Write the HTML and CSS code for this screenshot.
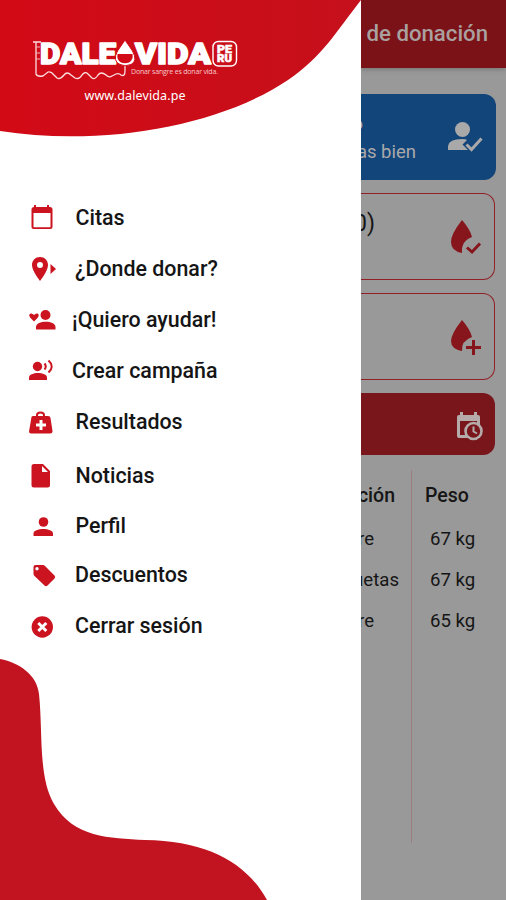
FILE: index.html
```html
<!DOCTYPE html>
<html lang="es">
<head>
<meta charset="utf-8">
<title>Dale Vida</title>
<link rel="stylesheet" href="styles.css">
</head>
<body>
<div class="app">
  <aside class="drawer">
    <header class="brand">
      <svg width="361" height="140" viewBox="0 0 361 140">
        <defs><linearGradient id="red"><stop offset="0" stop-color="#d20a16"/><stop offset="1" stop-color="#c5101b"/></linearGradient></defs>
        <path fill="url(#red)" d="M0 0H361C336 32 322 57 288 80C220 126 102 147 0 131Z"/>
        <g class="logo">
          <text x="40" y="63.500" textLength="76" lengthAdjust="spacingAndGlyphs">DALE</text>
          <text x="135" y="63.500" textLength="76" lengthAdjust="spacingAndGlyphs">VIDA</text>
        </g>
        <path d="M33 42H41M36 42V74Q37 77 43 76L48 72Q51 71 54 75L57 78Q60 80 64 75Q67 71 71 75L75 78Q79 80 82 75Q85 71 88 74L92 78Q95 80 98 75Q101 71 106 75Q109 78 112 76L116 74Q119 73 121 75Q125 77 125 71V64" fill="none" stroke="#fbdfe1" stroke-width="1.3"/>
        <path d="M36 47H40M36 53H40M36 59H40" stroke="#f4b5b9"/>
        <path d="M125 40L117.500 51Q112 61 120 64.500Q125 67 131 64.500Q138 61 132.500 51Z" fill="#fff" stroke="#d20a16"/>
        <path d="M117.500 54H132.500Q133.500 60 129 62.500Q125 64 121 62.500Q116.500 60 117.500 54Z" fill="#d20a16"/>
        <rect x="213" y="41.500" width="23.500" height="24.500" rx="5.500" fill="none" stroke="#fff" stroke-width="1.400"/>
        <g class="peru"><text x="217" y="52.500" textLength="15" lengthAdjust="spacingAndGlyphs">PE</text><text x="217" y="62" textLength="15" lengthAdjust="spacingAndGlyphs">RU</text></g>
        <text class="slogan" x="131" y="74" textLength="87">Donar sangre es donar vida.</text>
        <text class="site" x="84.500" y="100" textLength="101">www.dalevida.pe</text>
      </svg>
    </header>
    <nav class="menu">
      <a class="item"><svg class="icon" viewBox="0 0 30 30"><path fill-rule="evenodd" d="M7 2H9V4H20V2H22V4H23Q25.500 4 25.500 6.500V24Q25.500 26 23.500 26H6.500Q4.500 26 4.500 24V6.500Q4.500 4 7 4ZM6.500 10V24.200H23.500V10Z"/></svg><span>Citas</span></a>
      <a class="item near"><svg class="icon" viewBox="0 0 30 30"><path fill-rule="evenodd" d="M13 3C8.500 3 5 6.500 5 11C5 17 13 27 13 27S21 17 21 11C21 6.500 17.500 3 13 3ZM13 8A3 3 0 1 1 13 14A3 3 0 1 1 13 8ZM23.500 10L29 15L23.500 20Z"/></svg><span>¿Donde donar?</span></a>
      <a class="item close"><svg class="icon" viewBox="0 0 30 30"><circle cx="18.500" cy="10" r="5"/><path d="M9 24.500V22C9 15 28.500 15 28.500 22V24.500ZM7 16.500L3.500 13Q1 10 3.500 8.500Q5.500 8 7 10Q8.500 8 10.500 8.500Q13 10 10.500 13Z"/></svg><span>¡Quiero ayudar!</span></a>
      <a class="item close"><svg class="icon" viewBox="0 0 30 30"><circle cx="10.500" cy="10.500" r="4.700"/><path d="M2 24V21.500C2 15.500 20 15.500 20 21.500V24Z"/><path class="stroke" d="M17.500 7.500Q20 10.500 17.500 13.500M21.500 4.500Q28 10.500 21.500 16.500"/></svg><span>Crear campaña</span></a>
      <a class="item"><svg class="icon" viewBox="0 0 30 30"><path fill-rule="evenodd" d="M4.500 10Q4.500 9 6.500 9H9V8Q9 4.500 13.500 4.500Q18 4.500 18 8V9H21Q23.500 9 23.500 11L25.500 24Q25.500 26.500 23 26.500H4Q2 26.500 2 24.500ZM11 9H16V8Q16 6.500 13.500 6.500Q11 6.500 11 8ZM12.500 13V16.500H9V19.500H12.500V23H15.500V19.500H19V16.500H15.500V13Z"/></svg><span>Resultados</span></a>
      <a class="item"><svg class="icon" viewBox="0 0 30 30"><path fill-rule="evenodd" d="M7 3H16L23 10V24Q23 26.500 20.500 26.500H7Q4.500 26.500 4.500 24V5.500Q4.500 3 7 3ZM15 5V11H21Z"/></svg><span>Noticias</span></a>
      <a class="item"><svg class="icon" viewBox="0 0 30 30"><circle cx="16.500" cy="11" r="4.800"/><path d="M6.500 25V22.500C6.500 16.500 26 16.500 26 22.500V25Z"/></svg><span>Perfil</span></a>
      <a class="item near"><svg class="icon" viewBox="0 0 30 30"><path fill-rule="evenodd" d="M8.500 5H16Q17 5 18 6L27.500 15.500Q29 17 27.500 18.500L20.500 25.500Q19 27 17.500 25.500L7.500 16Q6.500 15 6.500 14V7Q6.500 5 8.500 5ZM10 7A1.700 1.700 0 1 0 10 10.400A1.700 1.700 0 1 0 10 7Z"/></svg><span>Descuentos</span></a>
      <a class="item near"><svg class="icon" viewBox="0 0 30 30"><circle cx="15.300" cy="16" r="10.700"/><path class="cross" d="M11.300 12L19.300 20M19.300 12L11.300 20"/></svg><span>Cerrar sesión</span></a>
    </nav>
    <svg class="wave" width="270" height="242" viewBox="0 658 270 242"><path fill="#c21420" d="M0 659C20 663 37 675 39 694C43 732 38 777 54 804C74 838 109 838 145 840C207 841 246 862 267 900H0Z"/></svg>
  </aside>
  <main class="page">
    <header class="bar"><h1>de donación</h1></header>
    <section class="cards">
      <article class="card blue"><div class="status"><span class="name">o</span><span>as bien</span></div>
        <svg width="36" height="32" viewBox="0 0 36 32"><circle cx="15.500" cy="8.500" r="7.500"/><path d="M1 29V25Q2 18 15 18Q19 18 20 19L15.500 23.500L21 29Z"/><path d="M19.500 23.500L24.500 28.500L34.500 17.500" fill="none" stroke="#aaa9aa" stroke-width="3"/></svg></article>
      <article class="card outline"><span class="count">0)</span>
        <svg width="32" height="38" viewBox="0 0 32 38"><path d="M12 1Q1 15 1 23Q1 32 12 34Q11 22 22 18Q20 10 12 1Z"/><path d="M17 28.500L22 33L30 24.500" class="mark"/></svg></article>
      <article class="card outline">
        <svg width="32" height="38" viewBox="0 0 32 38"><path d="M12 1Q1 15 1 22Q1 30 12 32Q11 22 22 18Q20 10 12 1Z"/><path d="M23.500 21V36M16 28.500H31" class="mark"/></svg></article>
      <article class="card red">
        <svg width="28" height="30" viewBox="0 0 28 30"><path fill-rule="evenodd" d="M4 1H7V4H18V1H21V4H22Q24 4 24 6V27H3Q1 27 1 25V6Q1 4 3 4H4ZM4 10V24H21V10Z"/><circle cx="17.500" cy="20" r="8" fill="#79161b" stroke="#b5abab" stroke-width="2.600"/><path d="M17.500 15.500V20.500L21 22.500" fill="none" stroke="#b5abab" stroke-width="2"/></svg></article>
    </section>
    <section class="table">
      <div class="col kind"><b>ción</b><span class="short">re</span><span class="long">uetas</span><span class="short">re</span></div>
      <div class="col weight"><b>Peso</b><span>67 kg</span><span>67 kg</span><span>65 kg</span></div>
    </section>
  </main>
</div>
</body>
</html>
```
FILE: styles.css
```css
* { box-sizing: border-box; }
body { margin: 0; font-family: Roboto, "Liberation Sans", sans-serif; color: #151515; }
.app { display: grid; grid-template-columns: 361px 145px; height: 900px; overflow: hidden; }
.drawer { display: flex; flex-direction: column; background: #fff; height: 900px; }
.brand { height: 192px; }
.brand svg, .wave { display: block; }
.logo { fill: #fff; stroke: #fff; stroke-width: 1.5; stroke-linejoin: round; font: 900 29px Roboto, sans-serif; }
.peru { fill: #fff; stroke: #fff; stroke-width: .5; font: 900 10px Roboto, sans-serif; }
.slogan { fill: #f7c9cc; font: 7px "Open Sans", sans-serif; }
.site { fill: #fff; font: 12.5px "Noto Sans", sans-serif; }
.menu { display: grid; grid-template-rows: 51px 51px 51px 51px 52px 56px 44px 54px 48px; padding-left: 27px; }
.item { display: flex; align-items: center; gap: 18.5px; font-size: 21.4px; font-weight: 500; line-height: 30px; white-space: nowrap; }
.near { gap: 18px; }
.close { gap: 15px; }
.icon { width: 30px; height: 30px; flex: none; fill: #cb1420; }
.icon .stroke { fill: none; stroke: #cb1420; stroke-width: 2; }
.icon .cross { stroke: #fff; stroke-width: 3; }
.wave { margin-top: auto; }
.page { background: #999; overflow: hidden; min-width: 0; }
.bar { height: 68px; background: #7a1218; padding: 18px 18px 0 0; display: flex; justify-content: flex-end; box-shadow: 0 1px 5px #5559; }
.bar h1 { margin: 0; font-size: 22.2px; line-height: 30px; font-weight: 500; color: #aaa0a0; white-space: nowrap; }
.cards { display: flex; flex-direction: column; gap: 13px; padding: 26px 11px 0 0; }
.card { height: 87px; display: flex; justify-content: flex-end; align-items: center; border-radius: 0 12px 12px 0; padding-right: 13px; }
.card svg { flex: none; }
.blue { height: 86px; background: #12457a; margin-right: -1px; color: #aaa9aa; fill: #aaa9aa; gap: 31px; }
.status { display: flex; flex-direction: column; align-items: flex-end; font-size: 18.5px; line-height: 28px; padding-top: 1px; white-space: nowrap; }
.name { margin-right: 53px; }
.outline { border: 1.5px solid #912027; border-left: 0; padding-right: 12px; fill: #87161c; }
.outline svg { margin-top: 3px; }
.mark { fill: none; stroke: #87161c; stroke-width: 3; }
.count { align-self: flex-start; margin: 15px auto 0 -7px; font-size: 23px; line-height: 30px; }
.red { height: 62px; background: #79161b; fill: #b5abab; padding-right: 11px; }
.red svg { margin-top: 4px; }
.table { display: grid; grid-template-columns: 51px 94px; height: 373px; margin-top: 15px; }
.col { display: grid; grid-template-columns: minmax(0, 1fr); grid-template-rows: 50px 37px 45px 38px; align-items: center; font-size: 18.6px; white-space: nowrap; min-width: 0; }
.col b { font-size: 19.5px; font-weight: 500; }
.kind { border-right: 1px solid #9a7e82; justify-items: end; padding-right: 16px; overflow: hidden; }
.kind .short { margin-right: 21px; }
.kind .long { margin-right: -4px; }
.weight { padding-left: 18px; }
.weight b { margin-left: -5px; }
```
